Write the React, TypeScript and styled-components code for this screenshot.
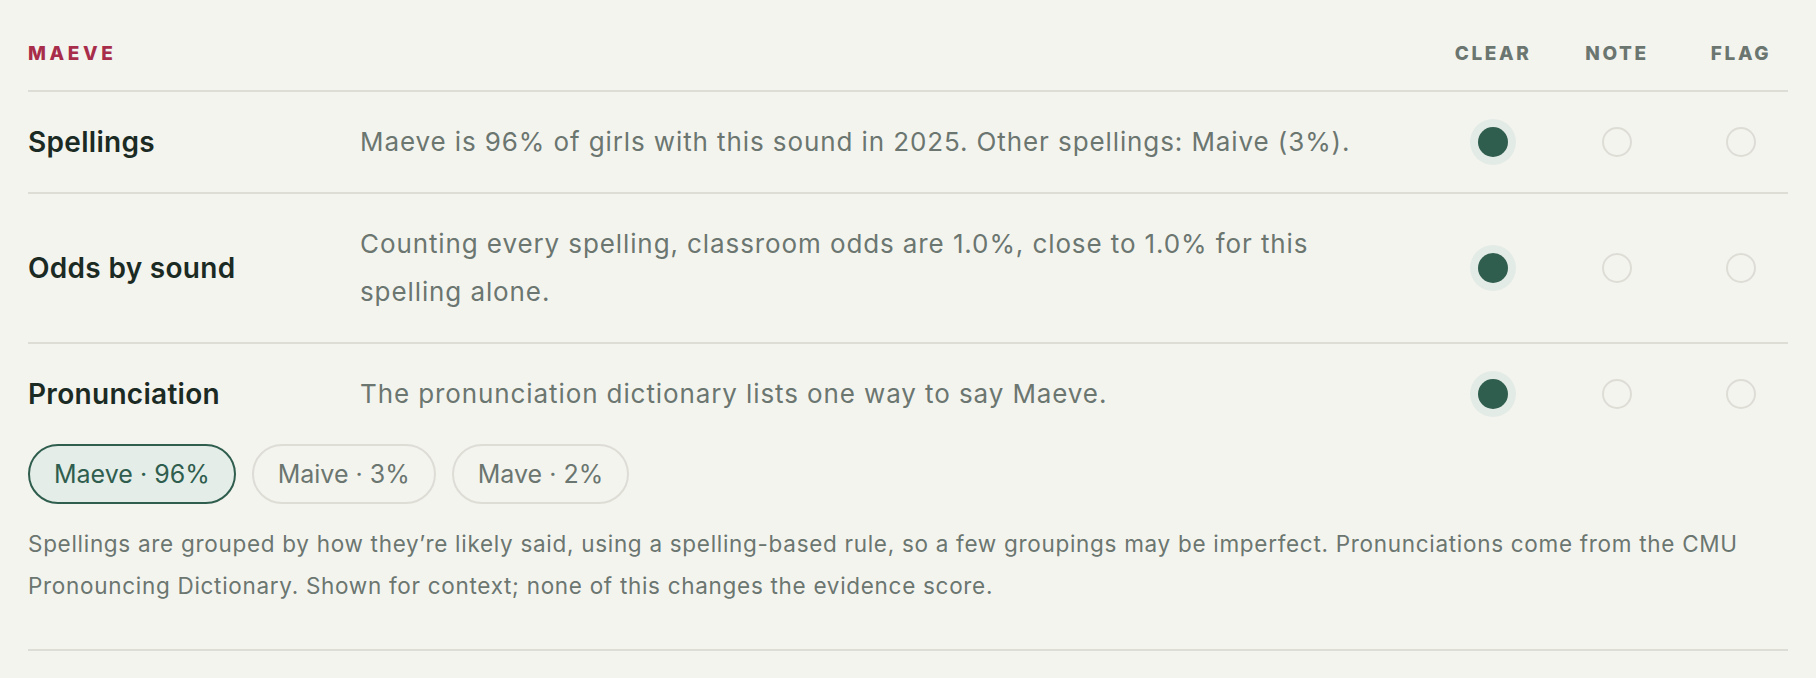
import React from 'react';
import styled, { createGlobalStyle } from 'styled-components';

const GlobalStyle = createGlobalStyle`
  html, body {
    margin: 0;
    padding: 0;
    background: #f4f4ef;
  }
  body {
    font-family: Inter, "Noto Sans", "Liberation Sans", sans-serif;
    -webkit-font-smoothing: antialiased;
  }
`;

const Panel = styled.section`
  padding: 38px 28px 0 28px;
`;

const Grid = styled.div`
  display: grid;
  grid-template-columns: 302px 1fr 94px 94px 94px;
  column-gap: 30px;
  align-items: center;
`;

const HeaderRow = styled(Grid)`
  padding-bottom: 20px;
  border-bottom: 2px solid #dddcd5;
`;

const NameTitle = styled.div`
  font-size: 19px;
  font-weight: 800;
  letter-spacing: 3.6px;
  color: #a82d4a;
  line-height: 32px;
`;

const ColumnTitle = styled.div`
  font-size: 19px;
  font-weight: 800;
  letter-spacing: 2.6px;
  color: #6b7670;
  text-align: center;
  line-height: 32px;
`;

const Row = styled.div`
  padding: 26px 0;
  border-bottom: 2px solid #dddcd5;
`;

const Label = styled.div`
  font-size: 28px;
  font-weight: 600;
  letter-spacing: 0.3px;
  color: #1b2b24;
  line-height: 48px;
`;

const Description = styled.div`
  font-size: 26px;
  letter-spacing: 0.9px;
  color: #6b7670;
  line-height: 48px;
  max-width: 1010px;
`;

const Cell = styled.div`
  display: flex;
  justify-content: center;
  align-items: center;
`;

const Radio = styled.span<{ $checked?: boolean }>`
  box-sizing: border-box;
  width: 30px;
  height: 30px;
  border-radius: 50%;
  border: ${({ $checked }) => ($checked ? 'none' : '2px solid #dddcd5')};
  background: ${({ $checked }) => ($checked ? '#2f5d4e' : 'transparent')};
  box-shadow: ${({ $checked }) => ($checked ? '0 0 0 8px #e3ebe6' : 'none')};
`;

const Pills = styled.div`
  display: flex;
  gap: 16px;
  margin-top: 26px;
`;

const Pill = styled.span<{ $active?: boolean }>`
  display: inline-flex;
  align-items: center;
  height: 60px;
  box-sizing: border-box;
  padding: 0 24px;
  border-radius: 30px;
  font-size: 25px;
  border: 2px solid ${({ $active }) => ($active ? '#2f5d4e' : '#dddcd5')};
  background: ${({ $active }) => ($active ? '#e4ede8' : 'transparent')};
  color: ${({ $active }) => ($active ? '#2f5d4e' : '#6b7670')};
`;

const Footnote = styled.p`
  margin: 19px 0 0 0;
  padding-bottom: 16px;
  font-size: 22.5px;
  letter-spacing: 0.7px;
  line-height: 42px;
  color: #6b7670;
`;

type Mark = 'clear' | 'note' | 'flag';

interface Check {
  label: string;
  text: string;
  mark: Mark;
}

const checks: Check[] = [
  {
    label: 'Spellings',
    text: 'Maeve is 96% of girls with this sound in 2025. Other spellings: Maive (3%).',
    mark: 'clear',
  },
  {
    label: 'Odds by sound',
    text: 'Counting every spelling, classroom odds are 1.0%, close to 1.0% for this spelling alone.',
    mark: 'clear',
  },
  {
    label: 'Pronunciation',
    text: 'The pronunciation dictionary lists one way to say Maeve.',
    mark: 'clear',
  },
];

const marks: Mark[] = ['clear', 'note', 'flag'];

const spellings = [
  { name: 'Maeve', share: '96%' },
  { name: 'Maive', share: '3%' },
  { name: 'Mave', share: '2%' },
];

const CheckLine: React.FC<{ check: Check }> = ({ check }) => (
  <Grid>
    <Label>{check.label}</Label>
    <Description>{check.text}</Description>
    {marks.map((m) => (
      <Cell key={m}>
        <Radio $checked={check.mark === m} />
      </Cell>
    ))}
  </Grid>
);

export default function App() {
  return (
    <>
      <GlobalStyle />
      <Panel>
        <HeaderRow>
          <NameTitle>MAEVE</NameTitle>
          <div />
          <ColumnTitle>CLEAR</ColumnTitle>
          <ColumnTitle>NOTE</ColumnTitle>
          <ColumnTitle>FLAG</ColumnTitle>
        </HeaderRow>
        {checks.map((c, i) => (
          <Row key={c.label}>
            <CheckLine check={c} />
            {i === checks.length - 1 && (
              <>
                <Pills>
                  {spellings.map((s, j) => (
                    <Pill key={s.name} $active={j === 0}>
                      {s.name} · {s.share}
                    </Pill>
                  ))}
                </Pills>
                <Footnote>
                  Spellings are grouped by how they’re likely said, using a spelling-based rule, so a few
                  groupings may be imperfect. Pronunciations come from the CMU Pronouncing Dictionary. Shown
                  for context; none of this changes the evidence score.
                </Footnote>
              </>
            )}
          </Row>
        ))}
      </Panel>
    </>
  );
}
